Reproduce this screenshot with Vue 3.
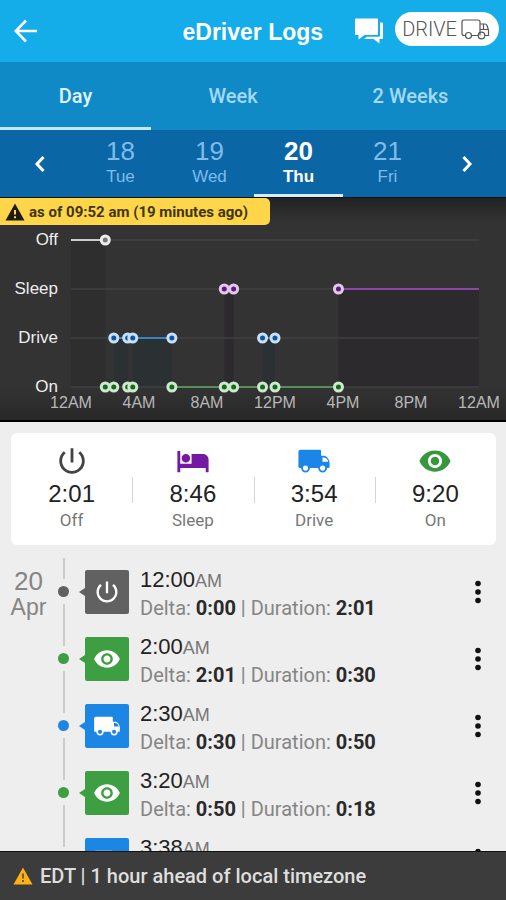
<script setup>
import { ref } from 'vue'

const icons = {
  off: 'M13 3h-2v10h2V3zm4.83 2.17l-1.42 1.42C17.99 7.86 19 9.81 19 12c0 3.87-3.13 7-7 7s-7-3.13-7-7c0-2.19 1.01-4.14 2.58-5.42L6.17 5.17C4.23 6.82 3 9.26 3 12c0 4.97 4.03 9 9 9s9-4.03 9-9c0-2.74-1.23-5.18-3.17-6.83z',
  sleep: 'M7 13c1.66 0 3-1.34 3-3S8.66 7 7 7s-3 1.34-3 3 1.34 3 3 3zm12-6h-8v7H3V5H1v15h2v-3h18v3h2v-9c0-2.21-1.79-4-4-4z',
  drive: 'M2.500 4H16q1 0 1 1v3.300h2q1.600 0 2.400 1.200l1 1.700q.6 1 .6 2.300V16q0 1-1 1h-.8a3.100 3.100 0 0 1-6.200 0H9.100a3.100 3.100 0 0 1-6.200 0H2q-1 0-1-1V5.500Q1 4 2.500 4zM18 9.500V12.500h4q-.2-1-.7-1.700-.8-1.300-2.300-1.300zM6 15.200a1.800 1.800 0 1 0 0 3.600a1.800 1.800 0 1 0 0-3.600zM18.100 15.200a1.800 1.800 0 1 0 0 3.600a1.800 1.800 0 1 0 0-3.600z',
  on: 'M12 4.500C7 4.500 2.730 7.610 1 12c1.730 4.390 6 7.500 11 7.500s9.270-3.110 11-7.500c-1.730-4.390-6-7.500-11-7.500zM12 17c-2.760 0-5-2.240-5-5s2.240-5 5-5 5 2.240 5 5-2.240 5-5 5zm0-8c-1.660 0-3 1.340-3 3s1.340 3 3 3 3-1.340 3-3-1.340-3-3-3z',
}

const ranges = ['Day', 'Week', '2 Weeks']
const range = ref('Day')

const days = [
  { date: 18, name: 'Tue' },
  { date: 19, name: 'Wed' },
  { date: 20, name: 'Thu' },
  { date: 21, name: 'Fri' },
]
const day = ref(20)

const lanes = [
  { key: 'off', label: 'Off', y: 42 },
  { key: 'sleep', label: 'Sleep', y: 91 },
  { key: 'drive', label: 'Drive', y: 140 },
  { key: 'on', label: 'On', y: 189 },
]
const laneY = Object.fromEntries(lanes.map((l) => [l.key, l.y]))
const toX = (minutes) => 71 + (minutes * 408) / 1440

const segments = [
  ['off', 0, 121],
  ['on', 121, 151],
  ['drive', 151, 200],
  ['on', 200, 218],
  ['drive', 218, 356],
  ['on', 356, 541],
  ['sleep', 541, 574],
  ['on', 574, 676],
  ['drive', 676, 720],
  ['on', 720, 944],
  ['sleep', 944, 1440],
].map(([key, from, to]) => ({ key, x1: toX(from), x2: toX(to), y: laneY[key] }))

const points = segments.flatMap((s, i) => {
  const list = []
  if (i > 0) list.push({ key: s.key, x: s.x1, y: s.y })
  if (i < segments.length - 1) list.push({ key: s.key, x: s.x2, y: s.y })
  return list
})

const hours = ['12AM', '4AM', '8AM', '12PM', '4PM', '8PM', '12AM'].map((label, i) => ({ label, x: toX(i * 240) }))

const totals = [
  { key: 'off', time: '2:01', label: 'Off' },
  { key: 'sleep', time: '8:46', label: 'Sleep' },
  { key: 'drive', time: '3:54', label: 'Drive' },
  { key: 'on', time: '9:20', label: 'On' },
]

const entries = [
  { key: 'off', time: '12:00', delta: '0:00', duration: '2:01' },
  { key: 'on', time: '2:00', delta: '2:01', duration: '0:30' },
  { key: 'drive', time: '2:30', delta: '0:30', duration: '0:50' },
  { key: 'on', time: '3:20', delta: '0:50', duration: '0:18' },
  { key: 'drive', time: '3:38' },
]
</script>

<template>
  <div class="app">
    <header class="bar">
      <button class="back" aria-label="Back">
        <svg viewBox="0 0 24 24" width="24" height="24"><path d="M12 1.500 1.800 12 12 22.500M2 12H23" fill="none" stroke="currentColor" stroke-width="2.600" /></svg>
      </button>
      <h1>eDriver Logs</h1>
      <button class="chat" aria-label="Messages">
        <svg viewBox="0 0 28 26" width="28" height="26">
          <path d="M1 .5H22q1 0 1 1V16q0 1-1 1H9.500L3.500 21.500V17H1q-1 0-1-1V1.500Q0 .5 1 .5z" fill="currentColor" />
          <path d="M25 4.500h2q1 0 1 1V20q0 1-1 1h-2.500v4.500L18.500 21H9l3-2.200h11.500q1.500 0 1.500-1.500z" fill="currentColor" />
        </svg>
      </button>
      <button class="drive-pill">
        <span>DRIVE</span>
        <svg viewBox="0 0 29 21" width="29" height="21" fill="none" stroke="currentColor" stroke-width="1.200">
          <path d="M4.500 16.500H3q-2 0-2-2V3q0-2 2-2h14q2 0 2 2v13.500M10.500 16.500h6.700M19 5h5q1.500 0 2 1.500l1.500 4.500v5.500h-3.700M19 10.500h8.500M22.500 5v5.500" />
          <circle cx="7.500" cy="16.500" r="3" /><circle cx="20.500" cy="16.500" r="3.300" />
        </svg>
      </button>
    </header>

    <nav class="ranges" aria-label="Range">
      <button v-for="r in ranges" :key="r" :class="{ active: r === range }" @click="range = r">{{ r }}</button>
    </nav>

    <nav class="days" aria-label="Day">
      <button class="step prev" aria-label="Previous day">
        <svg viewBox="0 0 12 18" width="12" height="18"><path d="M9.500 2 3 9l6.500 7" fill="none" stroke="currentColor" stroke-width="3" /></svg>
      </button>
      <button v-for="d in days" :key="d.date" class="day" :class="{ active: d.date === day }" @click="day = d.date">
        <span class="date">{{ d.date }}</span>
        <span class="name">{{ d.name }}</span>
      </button>
      <button class="step next" aria-label="Next day">
        <svg viewBox="0 0 12 18" width="12" height="18"><path d="M2.500 2 9 9l-6.500 7" fill="none" stroke="currentColor" stroke-width="3" /></svg>
      </button>
    </nav>

    <section class="chart">
      <p class="as-of">
        <svg viewBox="0 0 20 18" width="20" height="18"><path d="M10 .5 19.500 17.500H.5z" fill="#1d1a10" /><path d="M10 7v4.500M10 13.200v2" stroke="#ffd54a" stroke-width="2" /></svg>
        as of 09:52 am (19 minutes ago)
      </p>
      <svg class="plot" viewBox="0 0 506 222" role="img" aria-label="Duty status by hour">
        <template v-for="s in segments" :key="'a' + s.x1">
          <rect v-if="s.key !== 'on'" class="area" :class="s.key" :x="s.x1" :y="s.y" :width="s.x2 - s.x1" :height="laneY.on - s.y" />
        </template>
        <g v-for="l in lanes" :key="l.key">
          <line class="grid" x1="71" x2="479" :y1="l.y" :y2="l.y" />
          <text class="lane" x="58" :y="l.y + 5">{{ l.label }}</text>
        </g>
        <line v-for="s in segments" :key="'s' + s.x1" class="seg" :class="s.key" :x1="s.x1" :x2="s.x2" :y1="s.y" :y2="s.y" />
        <circle v-for="p in points" :key="p.key + p.x" class="point" :class="p.key" :cx="p.x" :cy="p.y" r="4" />
        <text v-for="h in hours" :key="h.x" class="hour" :x="h.x" y="210">{{ h.label }}</text>
      </svg>
    </section>

    <section class="totals">
      <div v-for="t in totals" :key="t.key" class="total">
        <svg :class="t.key" viewBox="0 0 24 24" width="34" height="34"><path :d="icons[t.key]" fill="currentColor" fill-rule="evenodd" /></svg>
        <strong>{{ t.time }}</strong>
        <span>{{ t.label }}</span>
      </div>
    </section>

    <main class="log">
      <div class="log-date"><span>20</span><span>Apr</span></div>
      <ol>
        <li v-for="e in entries" :key="e.time" :class="e.key">
          <span class="rail"><i class="dot"></i></span>
          <span class="badge">
            <svg viewBox="0 0 24 24" width="28" height="28"><path :d="icons[e.key]" fill="currentColor" fill-rule="evenodd" /></svg>
          </span>
          <div class="entry">
            <p class="time">{{ e.time }}<small>AM</small></p>
            <p v-if="e.duration" class="meta">Delta: <b>{{ e.delta }}</b> | Duration: <b>{{ e.duration }}</b></p>
          </div>
          <button class="more" :aria-label="'Options for ' + e.time + ' AM'">
            <svg viewBox="0 0 6 24" width="6" height="24" fill="currentColor"><circle cx="3" cy="3.500" r="2.800" /><circle cx="3" cy="12" r="2.800" /><circle cx="3" cy="20.500" r="2.800" /></svg>
          </button>
        </li>
      </ol>
    </main>

    <footer class="zone">
      <svg viewBox="0 0 20 18" width="20" height="18"><path d="M10 .5 19.500 17.500H.5z" fill="#fbb117" /><path d="M10 6.500v5M10 13v2" stroke="#7a5a20" stroke-width="2" /></svg>
      EDT | 1 hour ahead of local timezone
    </footer>
  </div>
</template>

<style>
body {
  margin: 0;
  background: #eee;
}
</style>

<style scoped>
* {
  box-sizing: border-box;
}
.app {
  display: flex;
  flex-direction: column;
  height: 100vh;
  overflow: hidden;
  background: #eee;
  font-family: Roboto, sans-serif;
}
button {
  border: 0;
  padding: 0;
  background: none;
  color: inherit;
  font: inherit;
  cursor: pointer;
}
svg {
  display: block;
  flex: none;
}
p, h1, ol {
  margin: 0;
  padding: 0;
}

.bar {
  flex: none;
  display: flex;
  align-items: center;
  height: 62px;
  padding: 0 7px 0 14px;
  background: #15acea;
  color: #fff;
}
h1 {
  margin-left: auto;
  padding-top: 2px;
  font: bold 23px/32px "Liberation Sans", sans-serif;
}
.chat {
  margin: 0 12px 0 32px;
}
.drive-pill {
  display: flex;
  align-items: center;
  gap: 4px;
  height: 34px;
  margin-bottom: 4px;
  padding: 0 9px 0 7px;
  border-radius: 17px;
  background: #fff;
  color: #555;
  font-size: 20px;
  font-weight: 300;
}

.ranges {
  flex: none;
  display: grid;
  grid-template-columns: 151fr 164fr 191fr;
  height: 68px;
  background: #0f8ac6;
  color: #a5d9f7;
  font-size: 20px;
  font-weight: 500;
}
.ranges button {
  border-top: 3px solid transparent;
  border-bottom: 3px solid transparent;
}
.ranges .active {
  border-bottom-color: #c3e8fb;
  color: #e2f5ff;
}

.days {
  flex: none;
  display: grid;
  grid-template-columns: 76px repeat(4, 1fr) 74px;
  height: 67px;
  background: #0b66a5;
  color: #fff;
}
.step {
  display: grid;
  place-items: center;
}
.prev {
  padding-left: 4px;
}
.next {
  padding-right: 4px;
}
.day {
  display: flex;
  flex-direction: column;
  align-items: center;
  padding-top: 6px;
  border-bottom: 3px solid transparent;
  color: #7dbcec;
  font-family: "Liberation Sans", sans-serif;
}
.date {
  font-size: 26px;
  line-height: 30px;
}
.name {
  font-size: 17px;
  line-height: 22px;
}
.day.active {
  border-bottom-color: #d5ecfa;
  color: #fff;
  font-weight: bold;
}

.chart {
  flex: none;
  position: relative;
  border-top: 1px solid #111;
  border-bottom: 2px solid #000;
  background: linear-gradient(#222, #333 24px, #333 85%, #282828);
}
.as-of {
  position: absolute;
  top: 0;
  left: 0;
  display: flex;
  align-items: center;
  gap: 4px;
  height: 27px;
  padding: 0 22px 0 5px;
  border-radius: 0 5px 5px 0;
  background: #ffd54a;
  color: #3f3510;
  font-size: 15px;
  font-weight: 700;
}
.plot {
  width: 100%;
  height: auto;
}
.plot text {
  font-family: "Liberation Sans", sans-serif;
}
.lane {
  fill: #eee;
  font-size: 17px;
  text-anchor: end;
}
.hour {
  fill: #b8b8b8;
  font-size: 16px;
  text-anchor: middle;
}
.grid {
  stroke: #494949;
}
.area.off { fill: #2e2e2e; }
.area.sleep { fill: #2d2a2e; }
.area.drive { fill: #2b3033; }
.seg.off { stroke: #ccc; stroke-width: 2; }
.seg.sleep { stroke: #8f45a5; stroke-width: 2; }
.seg.drive { stroke: #3583c4; stroke-width: 2; }
.seg.on { stroke: #558f57; stroke-width: 2; }
.point { stroke-width: 3; }
.point.off { fill: #777; stroke: #eee; }
.point.sleep { fill: #5d1b82; stroke: #e4c8ea; }
.point.drive { fill: #0d55a0; stroke: #c9dff5; }
.point.on { fill: #14691c; stroke: #cfe8cf; }

.totals {
  flex: none;
  display: grid;
  grid-template-columns: repeat(4, 1fr);
  margin: 11px 10px 0 11px;
  padding: 11px 0 15px;
  border-radius: 6px;
  background: #fff;
}
.total {
  position: relative;
  display: flex;
  flex-direction: column;
  align-items: center;
}
.total + .total::before {
  content: "";
  position: absolute;
  left: 0;
  top: 33px;
  width: 1px;
  height: 26px;
  background: #d5d5d5;
}
.total strong {
  color: #222;
  font: 24px/32px "Liberation Sans", sans-serif;
}
.total span {
  color: #777;
  font-size: 17px;
  line-height: 20px;
}
.total .off { color: #444; }
.total .sleep { color: #7519a3; }
.total .drive { color: #1c86e8; }
.total .on { color: #37983b; }

.log {
  flex: 1;
  min-height: 0;
  display: flex;
  overflow: hidden;
  padding-top: 13px;
}
.log-date {
  display: flex;
  flex-direction: column;
  align-items: center;
  width: 57px;
  padding-top: 10px;
  color: #858585;
  font: 26px/26px "Liberation Sans", sans-serif;
}
.log-date span + span {
  font-size: 23px;
}
ol {
  flex: 1;
  list-style: none;
}
li {
  display: flex;
  align-items: center;
  height: 67px;
  padding-right: 16px;
}
li.off { --tone: #616161; }
li.on { --tone: #3d9f41; }
li.drive { --tone: #1c86e4; }
.rail {
  display: flex;
  flex-direction: column;
  align-items: center;
  align-self: stretch;
  width: 13px;
  gap: 7px;
}
.rail::before,
.rail::after {
  content: "";
  flex: 1;
  width: 2px;
  background: #ccc;
}
.dot {
  width: 11px;
  height: 11px;
  border-radius: 50%;
  background: var(--tone);
}
.badge {
  position: relative;
  display: grid;
  place-items: center;
  width: 44px;
  height: 44px;
  margin: 0 11px 0 15px;
  border-radius: 2px;
  background: var(--tone);
  color: #fff;
}
.badge::before {
  content: "";
  position: absolute;
  right: 100%;
  top: 18px;
  border: 4px solid transparent;
  border-right: 6px solid var(--tone);
  border-left: 0;
}
.entry {
  flex: 1;
  align-self: flex-start;
  padding-top: 9px;
}
.time {
  color: #222;
  font: 22px/26px "Liberation Sans", sans-serif;
}
.time small {
  color: #777;
  font-size: 18px;
}
.meta {
  color: #858585;
  font-size: 20px;
  line-height: 28px;
}
.meta b {
  color: #2a2a2a;
}
.more {
  display: grid;
  place-items: center;
  width: 24px;
  height: 44px;
  color: #111;
}

.zone {
  flex: none;
  display: flex;
  align-items: center;
  gap: 7px;
  height: 49px;
  padding-left: 13px;
  border-top: 1px solid #111;
  background: #3c3c3c;
  color: #dedede;
  font-size: 20px;
  font-weight: 500;
}
</style>
